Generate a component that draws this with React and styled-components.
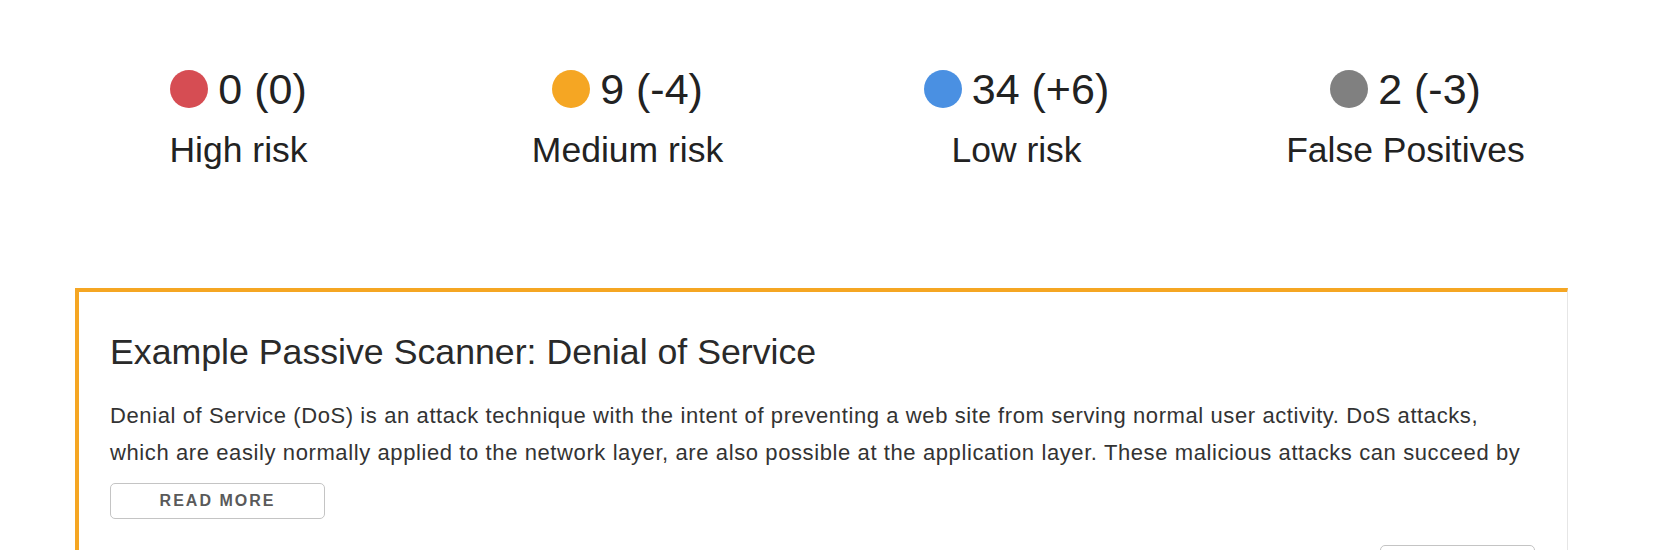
import React from 'react';
import styled, { createGlobalStyle } from 'styled-components';

const GlobalStyle = createGlobalStyle`
  html, body {
    margin: 0;
    padding: 0;
    background: #ffffff;
  }
  body {
    font-family: "Liberation Sans", Arial, sans-serif;
    color: #222222;
    -webkit-font-smoothing: antialiased;
  }
`;

const Page = styled.div`
  padding: 64px 62px 0 44px;
  overflow: hidden;
  height: 550px;
  box-sizing: border-box;
`;

const Stats = styled.div`
  display: grid;
  grid-template-columns: repeat(4, 1fr);
`;

const Stat = styled.div`
  display: flex;
  flex-direction: column;
  align-items: center;
`;

const Count = styled.div`
  display: flex;
  align-items: center;
  gap: 10px;
  font-size: 43px;
  line-height: 50px;
  color: #222222;
`;

const Dot = styled.span`
  display: inline-block;
  width: 38px;
  height: 38px;
  border-radius: 50%;
  background: ${({ color }) => color};
`;

const Label = styled.div`
  margin-top: 14px;
  font-size: 35.5px;
  line-height: 44px;
  color: #222222;
`;

const Card = styled.div`
  margin: 116px 32px 0 31px;
  border: 1px solid #e6e6e6;
  border-top: 4px solid #f5a623;
  border-left: 4px solid #f5a623;
  padding: 38px 32px 0 31px;
`;

const Title = styled.h2`
  margin: 0;
  font-size: 35.7px;
  font-weight: 400;
  line-height: 44px;
  color: #2a2a2a;
`;

const Description = styled.p`
  margin: 23px 0 0;
  max-width: 1425px;
  font-size: 22px;
  letter-spacing: 0.6px;
  line-height: 37px;
  color: #333333;
`;

const Button = styled.button`
  display: block;
  box-sizing: border-box;
  width: ${({ width }) => width}px;
  height: 36px;
  margin: ${({ margin }) => margin};
  padding: 0;
  border: 1px solid #c4c4c4;
  border-radius: 5px;
  background: #ffffff;
  font-family: "Liberation Sans", Arial, sans-serif;
  font-size: 16px;
  font-weight: 700;
  letter-spacing: 2px;
  color: #5a5a5a;
  cursor: pointer;
`;

const Footer = styled.div`
  display: flex;
  justify-content: flex-end;
`;

const stats = [
  { color: '#d64d53', value: '0 (0)', label: 'High risk' },
  { color: '#f5a623', value: '9 (-4)', label: 'Medium risk' },
  { color: '#4a90e2', value: '34 (+6)', label: 'Low risk' },
  { color: '#808080', value: '2 (-3)', label: 'False Positives' },
];

export default function App() {
  return (
    <>
      <GlobalStyle />
      <Page>
        <Stats>
          {stats.map(s => (
            <Stat key={s.label}>
              <Count>
                <Dot color={s.color} />
                <span>{s.value}</span>
              </Count>
              <Label>{s.label}</Label>
            </Stat>
          ))}
        </Stats>
        <Card>
          <Title>Example Passive Scanner: Denial of Service</Title>
          <Description>
            Denial of Service (DoS) is an attack technique with the intent of preventing a web site from serving
            normal user activity. DoS attacks, which are easily normally applied to the network layer, are also
            possible at the application layer. These malicious attacks can succeed by
          </Description>
          <Button width={215} margin="12px 0 0">READ MORE</Button>
          <Footer>
            <Button width={155} margin="26px 0 0">DETAILS</Button>
          </Footer>
        </Card>
      </Page>
    </>
  );
}
